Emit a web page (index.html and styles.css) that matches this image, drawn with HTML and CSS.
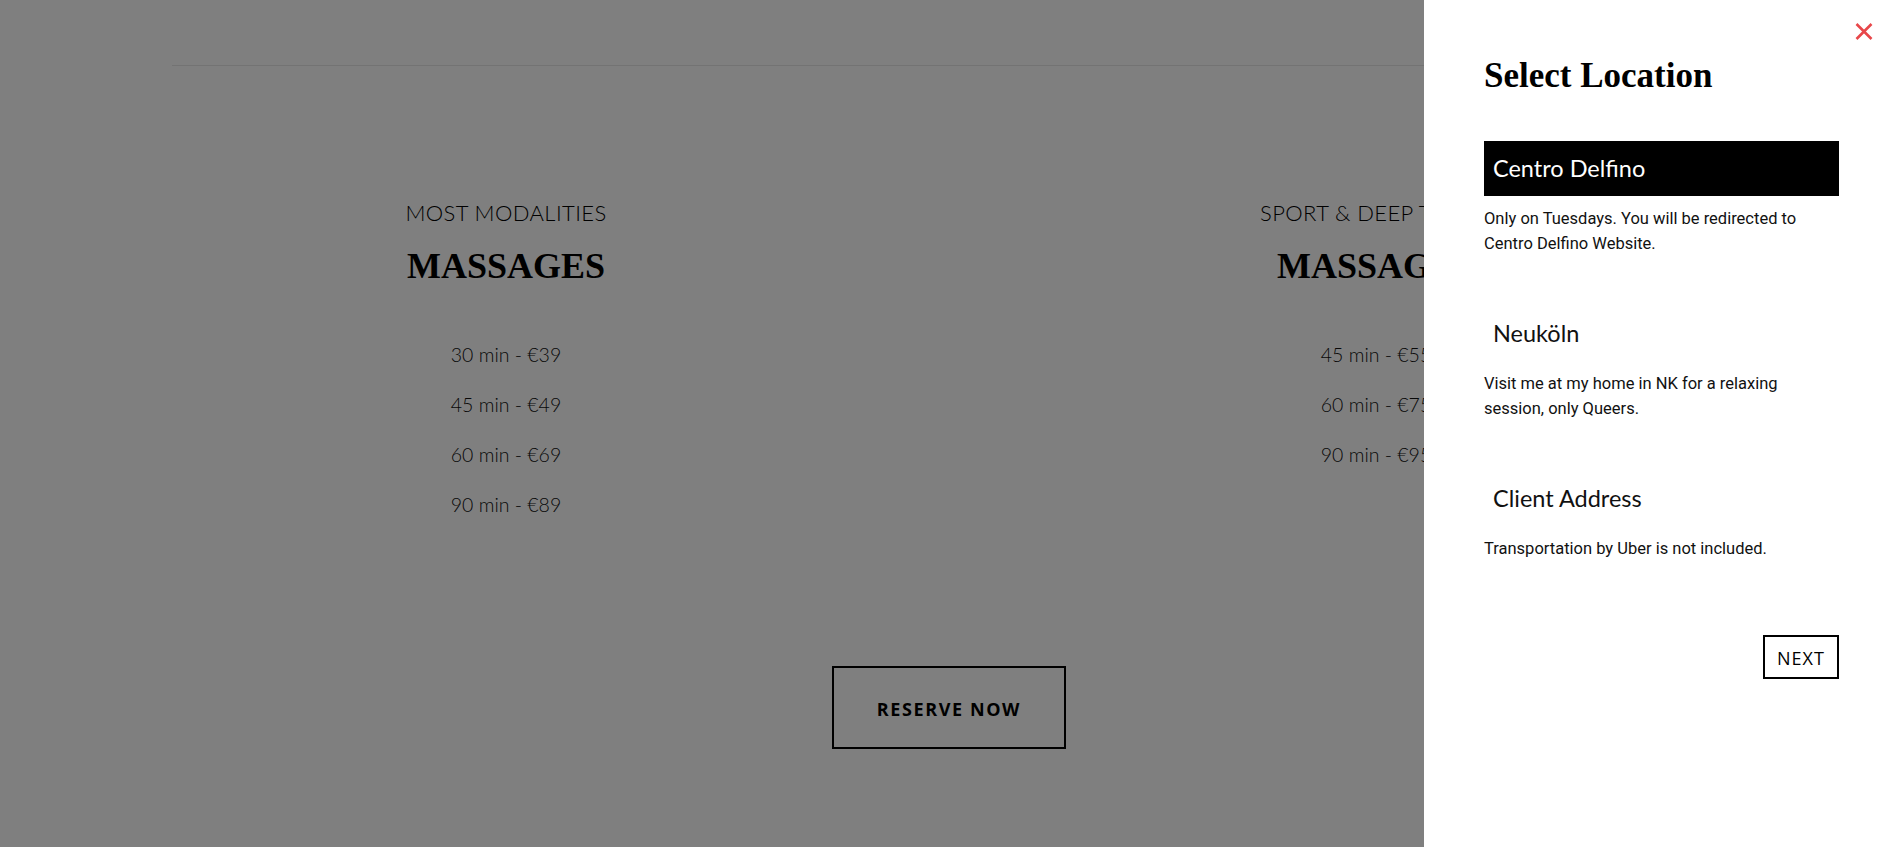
FILE: index.html
```html
<!DOCTYPE html>
<html lang="en">
<head>
<meta charset="utf-8">
<title>Select Location</title>
<link rel="stylesheet" href="styles.css">
</head>
<body>
<main class="page">
  <div class="divider"></div>
  <section class="plans">
    <div class="plan">
      <p class="plan-kicker">MOST MODALITIES</p>
      <h2 class="plan-title">MASSAGES</h2>
      <ul class="plan-prices">
        <li>30 min - €39</li>
        <li>45 min - €49</li>
        <li>60 min - €69</li>
        <li>90 min - €89</li>
      </ul>
    </div>
    <div class="plan">
      <p class="plan-kicker">SPORT &amp; DEEP TISSUE</p>
      <h2 class="plan-title">MASSAGES</h2>
      <ul class="plan-prices">
        <li>45 min - €55</li>
        <li>60 min - €75</li>
        <li>90 min - €95</li>
      </ul>
    </div>
  </section>
  <div class="reserve-wrap">
    <a class="reserve" href="#">RESERVE NOW</a>
  </div>
</main>

<div class="overlay"></div>

<aside class="drawer">
  <button class="close" aria-label="Close">
    <svg width="18" height="17" viewBox="0 0 18 17"><path d="M1.5 1 L16.5 16 M16.5 1 L1.5 16" stroke="#e8474a" stroke-width="2.6" fill="none"/></svg>
  </button>
  <h1 class="drawer-title">Select Location</h1>
  <div class="locations">
    <div class="loc">
      <div class="loc-name is-active">Centro Delfino</div>
      <p class="loc-desc">Only on Tuesdays. You will be redirected to Centro Delfino Website.</p>
    </div>
    <div class="loc">
      <div class="loc-name">Neuköln</div>
      <p class="loc-desc">Visit me at my home in NK for a relaxing session, only Queers.</p>
    </div>
    <div class="loc">
      <div class="loc-name">Client Address</div>
      <p class="loc-desc">Transportation by Uber is not included.</p>
    </div>
  </div>
  <div class="actions">
    <button class="next">NEXT</button>
  </div>
</aside>
</body>
</html>
```

FILE: styles.css
```css
html, body {
  margin: 0;
  padding: 0;
  background: #fff;
  height: 100%;
  overflow: hidden;
}

.page {
  font-family: "Lato", "Open Sans", sans-serif;
  color: #222;
}

.divider {
  height: 1px;
  background: #e6e6e6;
  margin: 65px 172px 0;
}

.plans {
  display: grid;
  grid-template-columns: 870px 870px;
  margin: 134px 0 0 71px;
}

.plan {
  text-align: center;
}

.plan-kicker {
  margin: 0;
  font-weight: 300;
  font-size: 22px;
  line-height: 25px;
  letter-spacing: 0.4px;
  color: #000;
}

.plan-title {
  margin: 19px 0 0;
  font-family: "Liberation Serif", "Times New Roman", serif;
  font-weight: 700;
  font-size: 36px;
  line-height: 44px;
  color: #000;
}

.plan-prices {
  list-style: none;
  margin: 42px 0 0;
  padding: 0;
  font-weight: 300;
  font-size: 19.5px;
  line-height: 50px;
  color: #111;
}

.reserve-wrap {
  display: flex;
  justify-content: center;
  margin-top: 136px;
  padding-left: 6px;
}

.reserve {
  display: flex;
  align-items: center;
  justify-content: center;
  box-sizing: border-box;
  width: 234px;
  height: 83px;
  border: 2px solid #000;
  font-family: "Open Sans", sans-serif;
  font-weight: 700;
  font-size: 18px;
  letter-spacing: 1.6px;
  color: #000;
  text-decoration: none;
  padding-top: 3px;
}

.overlay {
  position: fixed;
  inset: 0;
  background: rgba(0, 0, 0, 0.5);
}

.drawer {
  position: fixed;
  top: 0;
  right: 0;
  bottom: 0;
  width: 468px;
  box-sizing: border-box;
  padding: 56px 53px 0 60px;
  background: #fff;
  color: #000;
}

.close {
  position: absolute;
  top: 23px;
  right: 19px;
  width: 18px;
  height: 17px;
  padding: 0;
  border: 0;
  background: none;
  cursor: pointer;
}

.close svg {
  display: block;
}

.drawer-title {
  margin: 0;
  font-family: "Liberation Serif", "Times New Roman", serif;
  font-weight: 700;
  font-size: 35px;
  line-height: 40px;
  color: #000;
}

.locations {
  margin-top: 45px;
  display: flex;
  flex-direction: column;
  gap: 50px;
}

.loc-name {
  height: 55px;
  line-height: 54px;
  padding-left: 9px;
  font-family: "Lato", "Open Sans", sans-serif;
  font-weight: 400;
  font-size: 23.5px;
  color: #111;
}

.loc-name.is-active {
  background: #000;
  color: #fff;
}

.loc-desc {
  margin: 10px 0 0;
  font-family: "Roboto", sans-serif;
  font-size: 16.5px;
  line-height: 25px;
  color: #111;
}

.actions {
  display: flex;
  justify-content: flex-end;
  margin-top: 74px;
}

.next {
  box-sizing: border-box;
  width: 76px;
  height: 44px;
  padding: 3px 0 0;
  border: 2px solid #000;
  background: #fff;
  font-family: "Open Sans", sans-serif;
  font-size: 18px;
  letter-spacing: 1px;
  color: #000;
  line-height: 35px;
  cursor: pointer;
}
```
